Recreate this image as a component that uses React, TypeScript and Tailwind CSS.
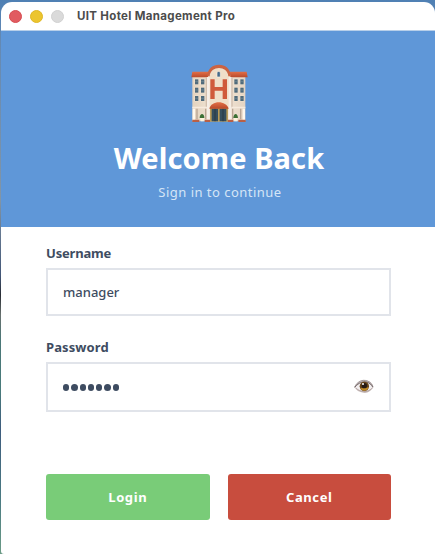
import React from "react";

const sans = "font-['Noto_Sans','Open_Sans',sans-serif]";

function HotelIcon() {
  const windows = [
    [43, 71], [61, 71], [43, 96], [61, 96], [43, 121], [61, 121],
    [161, 71], [179, 71], [161, 96], [179, 96], [161, 121], [179, 121],
  ];
  return (
    <svg className="ml-[3px]" width="80" height="75" viewBox="0 0 240 225" aria-label="Hotel">
      <defs>
        <linearGradient id="wall" x1="0" x2="1" y1="0" y2="0">
          <stop offset="0" stopColor="#e3d3bf" />
          <stop offset="0.5" stopColor="#f5e9da" />
          <stop offset="1" stopColor="#e5d4c2" />
        </linearGradient>
        <linearGradient id="roof" x1="0" x2="0" y1="0" y2="1">
          <stop offset="0" stopColor="#e27048" />
          <stop offset="1" stopColor="#b9492a" />
        </linearGradient>
      </defs>
      <path d="M37 64H196V199H37Z" fill="url(#wall)" />
      <path d="M37 50H88V67H34ZM147 50H200L203 67H147Z" fill="url(#roof)" />
      <path d="M84 62C86 25 147 25 151 62V158H84Z" fill="#f0dfc9" />
      <path d="M82 64C82 18 152 18 152 64H145C143 31 91 31 89 64Z" fill="#cb6342" />
      <path d="M81 66H89V199H81ZM146 66H154V199H146Z" fill="#f6eee6" />
      <path d="M77 68H81V158H77ZM154 68H158V158H154Z" fill="#d2bfae" />
      {windows.map(([x, y]) => (
        <g key={`${x}-${y}`}>
          <rect x={x} y={y} width="13" height="19" fill="#efe0cd" />
          <rect x={x + 2} y={y + 2} width="10" height="15" fill="#4f6a7b" />
          <path d={`M${x + 2} ${y + 9}h10`} stroke="#8198a3" strokeWidth="1.5" />
        </g>
      ))}
      <path d="M111 66V54C111 48 121 48 121 54V66Z" fill="#456b8b" stroke="#fff4e2" strokeWidth="2" />
      <path d="M91 73H104V96H128V73H141V132H128V107H104V132H91Z" fill="#d05a3b" />
      <path d="M37 155H81V160H37ZM154 155H196V160H154Z" fill="#f7ebde" />
      <path d="M49 161H53V193H49ZM75 161H79V193H75ZM156 161H160V193H156ZM180 161H184V193H180Z" fill="#b9a493" />
      <path d="M38 161H45V195H38ZM188 161H195V195H188Z" fill="#fff7ec" />
      <path d="M37 194H58V201H37ZM74 194H91V201H74ZM143 194H160V201H143ZM175 194H197V201H175Z" fill="#b96046" />
      <rect x="90" y="157" width="54" height="43" fill="#b89b58" />
      <path d="M95 161H114V199H95ZM119 161H139V199H119Z" fill="#354e5d" />
      <path d="M105 161V199M129 161V199" stroke="#252e35" strokeWidth="2" />
      <path d="M88 161C93 135 139 135 146 161Z" fill="url(#roof)" />
      <path d="M59 189C59 181 63 177 66 177S74 182 73 189ZM160 189C160 182 164 177 167 177S174 182 174 189Z" fill="#3d7136" />
      <path d="M60 189H73L71 199H63ZM161 189H173L171 199H163Z" fill="#fff2dc" />
    </svg>
  );
}

function EyeIcon() {
  return (
    <svg width="20" height="18" viewBox="0 0 60 54" aria-label="Show password">
      <path d="M1 27C8 12 22 3 36 7C48 9 56 17 58 27C51 40 39 47 28 44C15 43 7 37 1 27Z" fill="#c9bdbc" />
      <path d="M3 28C13 17 23 11 35 14C45 15 51 20 56 28C47 37 37 40 29 39C17 39 10 35 3 28Z" fill="#f3eff0" />
      <path d="M1 29C10 10 26 3 40 9C49 12 55 19 57 27" fill="none" stroke="#998f91" strokeWidth="2.5" />
      <path d="M3 27C14 14 26 10 37 12C47 14 52 20 56 27" fill="none" stroke="#665b5c" strokeWidth="2.5" />
      <path d="M5 29C15 41 42 48 57 28" fill="none" stroke="#a99896" strokeWidth="2" />
      <circle cx="31" cy="25" r="14" fill="#654319" />
      <path d="M19 31C24 42 41 41 44 27L35 30Z" fill="#bf8b28" />
      <circle cx="31" cy="23" r="8" fill="#251a16" />
      <circle cx="27" cy="18" r="3" fill="#fff" />
    </svg>
  );
}

export default function App() {
  return (
    <div className={`h-[554px] w-[435px] overflow-hidden bg-[linear-gradient(180deg,#4f80b4_0px,#6389b4_40px,#8295a6_200px,#435778_275px,#292d34_295px,#68716f_315px,#4b7777_340px,#497b7b_390px,#3e5c7e_430px,#4b7b82_500px,#6b9b86_554px)] pt-[2px] pl-px ${sans}`}>
      <main className="h-[552px] w-[434px] overflow-hidden rounded-t-[11px] rounded-bl-[3px] bg-white">
        <div className="flex h-[29px] items-center border-b border-[#b8cfe9] pl-2">
          <div className="flex gap-[8px]">
            <span className="size-[13px] rounded-full border border-[#d64c51] bg-[#e15b60]" />
            <span className="size-[13px] rounded-full border border-[#dfb725] bg-[#ecc52f]" />
            <span className="size-[13px] rounded-full border border-[#d0d0d0] bg-[#dadada]" />
          </div>
          <span className="ml-[13px] whitespace-nowrap font-[Inter,sans-serif] text-[11.5px] font-bold leading-4 tracking-[0.33px] text-[#4c4c4c]">UIT Hotel Management Pro</span>
        </div>
        <header className="flex h-[196px] flex-col items-center bg-[#5f97d8] pt-6 text-white">
          <HotelIcon />
          <h1 className="mt-[8px] ml-[2px] whitespace-nowrap text-[29px] font-bold leading-10 tracking-[0.1px]">Welcome Back</h1>
          <p className="mt-[4px] ml-[4px] whitespace-nowrap text-[13px] leading-5 tracking-[0.48px] text-[#d5e5f6]">Sign in to continue</p>
        </header>
        <form className="px-[45px] pt-4 text-[13px] text-[#3e4c61]">
          <label className="block h-[25px] font-bold leading-5 tracking-[-0.2px]">Username</label>
          <div className="flex h-12 w-[345px] items-center border-2 border-[#e1e4ea] px-[15px] pt-px font-medium">manager</div>
          <label className="mt-[21px] block h-[25px] font-bold leading-5 tracking-[0.1px]">Password</label>
          <div className="flex h-[50px] w-[345px] items-center justify-between border-2 border-[#e1e4ea] px-[15px]">
            <div className="flex w-[56px] justify-between pt-px" aria-label="Password value">
              {[0, 1, 2, 3, 4, 5, 6].map((dot) => <span key={dot} className="size-[6.4px] rounded-full bg-[#3e4c61]" />)}
            </div>
            <EyeIcon />
          </div>
          <div className="mt-[62px] grid w-[345px] grid-cols-2 gap-[18px] text-white">
            <button type="button" className="h-[46px] rounded-[3px] bg-[#79cc78] pt-px font-bold tracking-[0.6px]">Login</button>
            <button type="button" className="h-[46px] rounded-[3px] bg-[#c84d3e] pt-px font-bold tracking-[0.6px]">Cancel</button>
          </div>
        </form>
      </main>
    </div>
  );
}
